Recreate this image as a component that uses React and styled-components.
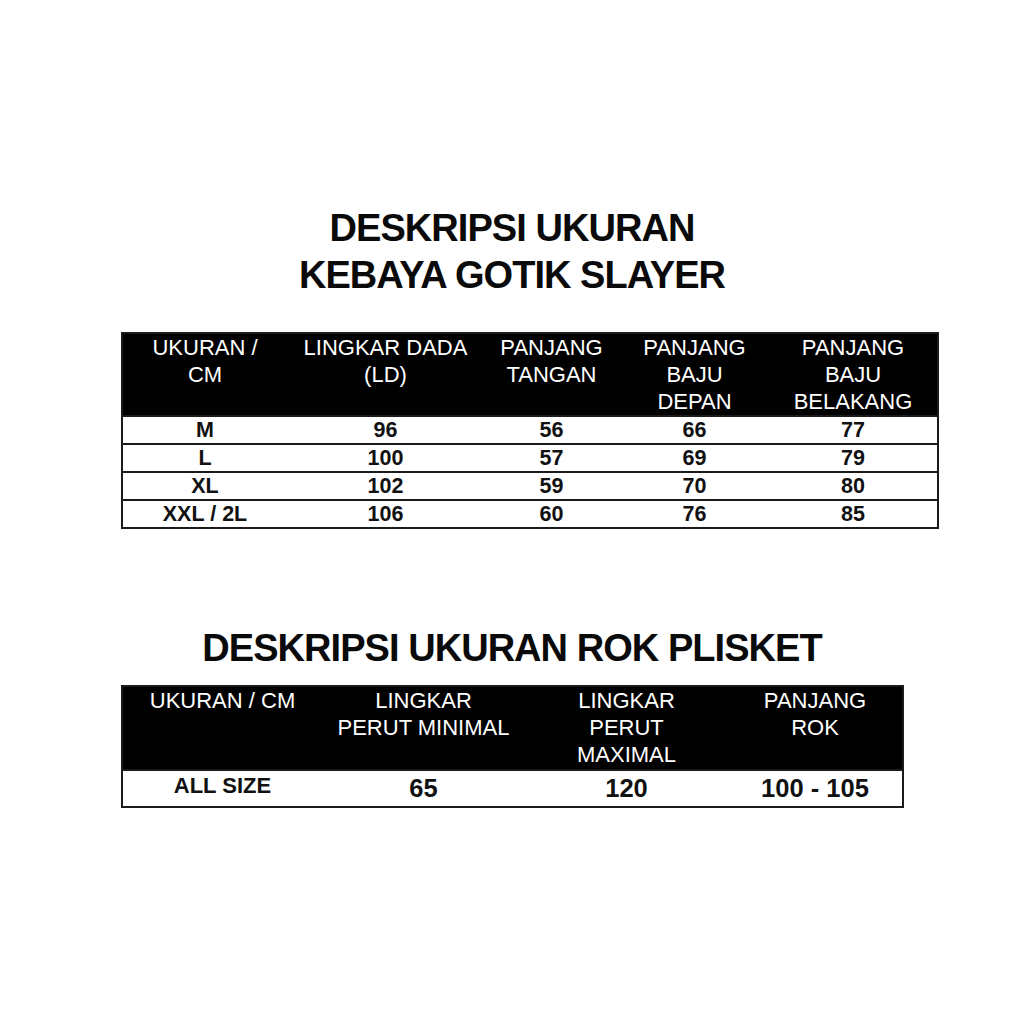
import React from "react";
import styled, { createGlobalStyle } from "styled-components";

const Global = createGlobalStyle`
  html, body { margin: 0; padding: 0; background: #ffffff; }
  body { font-family: "Liberation Sans", Arial, Helvetica, sans-serif; color: #111; }
  *, *::before, *::after { box-sizing: border-box; }
`;

const Page = styled.div`
  width: 1024px;
  height: 1024px;
  padding-top: 204.5px;
  display: flex;
  flex-direction: column;
  background: #fff;
`;

const Title = styled.h1`
  margin: ${(p) => p.$mt || 0}px 0 0 0;
  font-size: 38px;
  line-height: 47px;
  font-weight: 700;
  letter-spacing: -0.95px;
  text-align: center;
  color: #0a0a0a;
`;

const TableBlock = styled.div`
  padding-left: 120.5px;
  margin-top: ${(p) => p.$mt || 0}px;
  display: flex;
`;

const Table = styled.div`
  width: ${(p) => p.$w}px;
  border: 2px solid #1b1b1b;
  display: flex;
  flex-direction: column;
`;

const HeaderRow = styled.div`
  display: grid;
  grid-template-columns: ${(p) => p.$cols};
  background: #000;
  height: ${(p) => p.$h || 81}px;
`;

const HeadCell = styled.div`
  color: #fff;
  font-size: 22px;
  line-height: 27px;
  text-align: center;
  white-space: nowrap;
`;

const DataRow = styled.div`
  display: grid;
  grid-template-columns: ${(p) => p.$cols};
  border-top: 2px solid #1b1b1b;
  height: ${(p) => p.$h}px;
  align-items: center;
  background: #fff;
`;

const DataCell = styled.div`
  font-size: ${(p) => p.$size || 20}px;
  font-weight: 700;
  text-align: center;
  color: #111;
  line-height: 1;
  padding-top: ${(p) => p.$pt || 0}px;
  padding-bottom: ${(p) => p.$pb || 0}px;
`;

const cols1 = "165px 196px 136px 150px 167px";
const cols2 = "200px 202px 204px 173px";

const head1 = [
  ["UKURAN /", "CM"],
  ["LINGKAR DADA", "(LD)"],
  ["PANJANG", "TANGAN"],
  ["PANJANG", "BAJU", "DEPAN"],
  ["PANJANG", "BAJU", "BELAKANG"],
];

const rows1 = [
  ["M", "96", "56", "66", "77"],
  ["L", "100", "57", "69", "79"],
  ["XL", "102", "59", "70", "80"],
  ["XXL / 2L", "106", "60", "76", "85"],
];

const head2 = [
  ["UKURAN / CM"],
  ["LINGKAR", "PERUT MINIMAL"],
  ["LINGKAR", "PERUT", "MAXIMAL"],
  ["PANJANG", "ROK"],
];

const Head = ({ lines }) => (
  <HeadCell>
    {lines.map((l, i) => (
      <React.Fragment key={i}>
        {l}
        {i < lines.length - 1 && <br />}
      </React.Fragment>
    ))}
  </HeadCell>
);

export default function App() {
  return (
    <>
      <Global />
      <Page>
        <Title>
          DESKRIPSI UKURAN
          <br />
          KEBAYA GOTIK SLAYER
        </Title>
        <TableBlock $mt={33.5}>
          <Table $w={818}>
            <HeaderRow $cols={cols1}>
              {head1.map((h, i) => (
                <Head key={i} lines={h} />
              ))}
            </HeaderRow>
            {rows1.map((r, ri) => (
              <DataRow key={ri} $cols={cols1} $h={28}>
                {r.map((c, ci) => (
                  <DataCell key={ci} $size={21.5} $pt={1}>
                    {c}
                  </DataCell>
                ))}
              </DataRow>
            ))}
          </Table>
        </TableBlock>
        <Title $mt={95.5}>DESKRIPSI UKURAN ROK PLISKET</Title>
        <TableBlock $mt={13.5}>
          <Table $w={783}>
            <HeaderRow $cols={cols2} $h={82}>
              {head2.map((h, i) => (
                <Head key={i} lines={h} />
              ))}
            </HeaderRow>
            <DataRow $cols={cols2} $h={37}>
              <DataCell $size={22} $pb={5}>ALL SIZE</DataCell>
              <DataCell $size={25.5}>65</DataCell>
              <DataCell $size={25.5}>120</DataCell>
              <DataCell $size={25.5}>100 - 105</DataCell>
            </DataRow>
          </Table>
        </TableBlock>
      </Page>
    </>
  );
}
